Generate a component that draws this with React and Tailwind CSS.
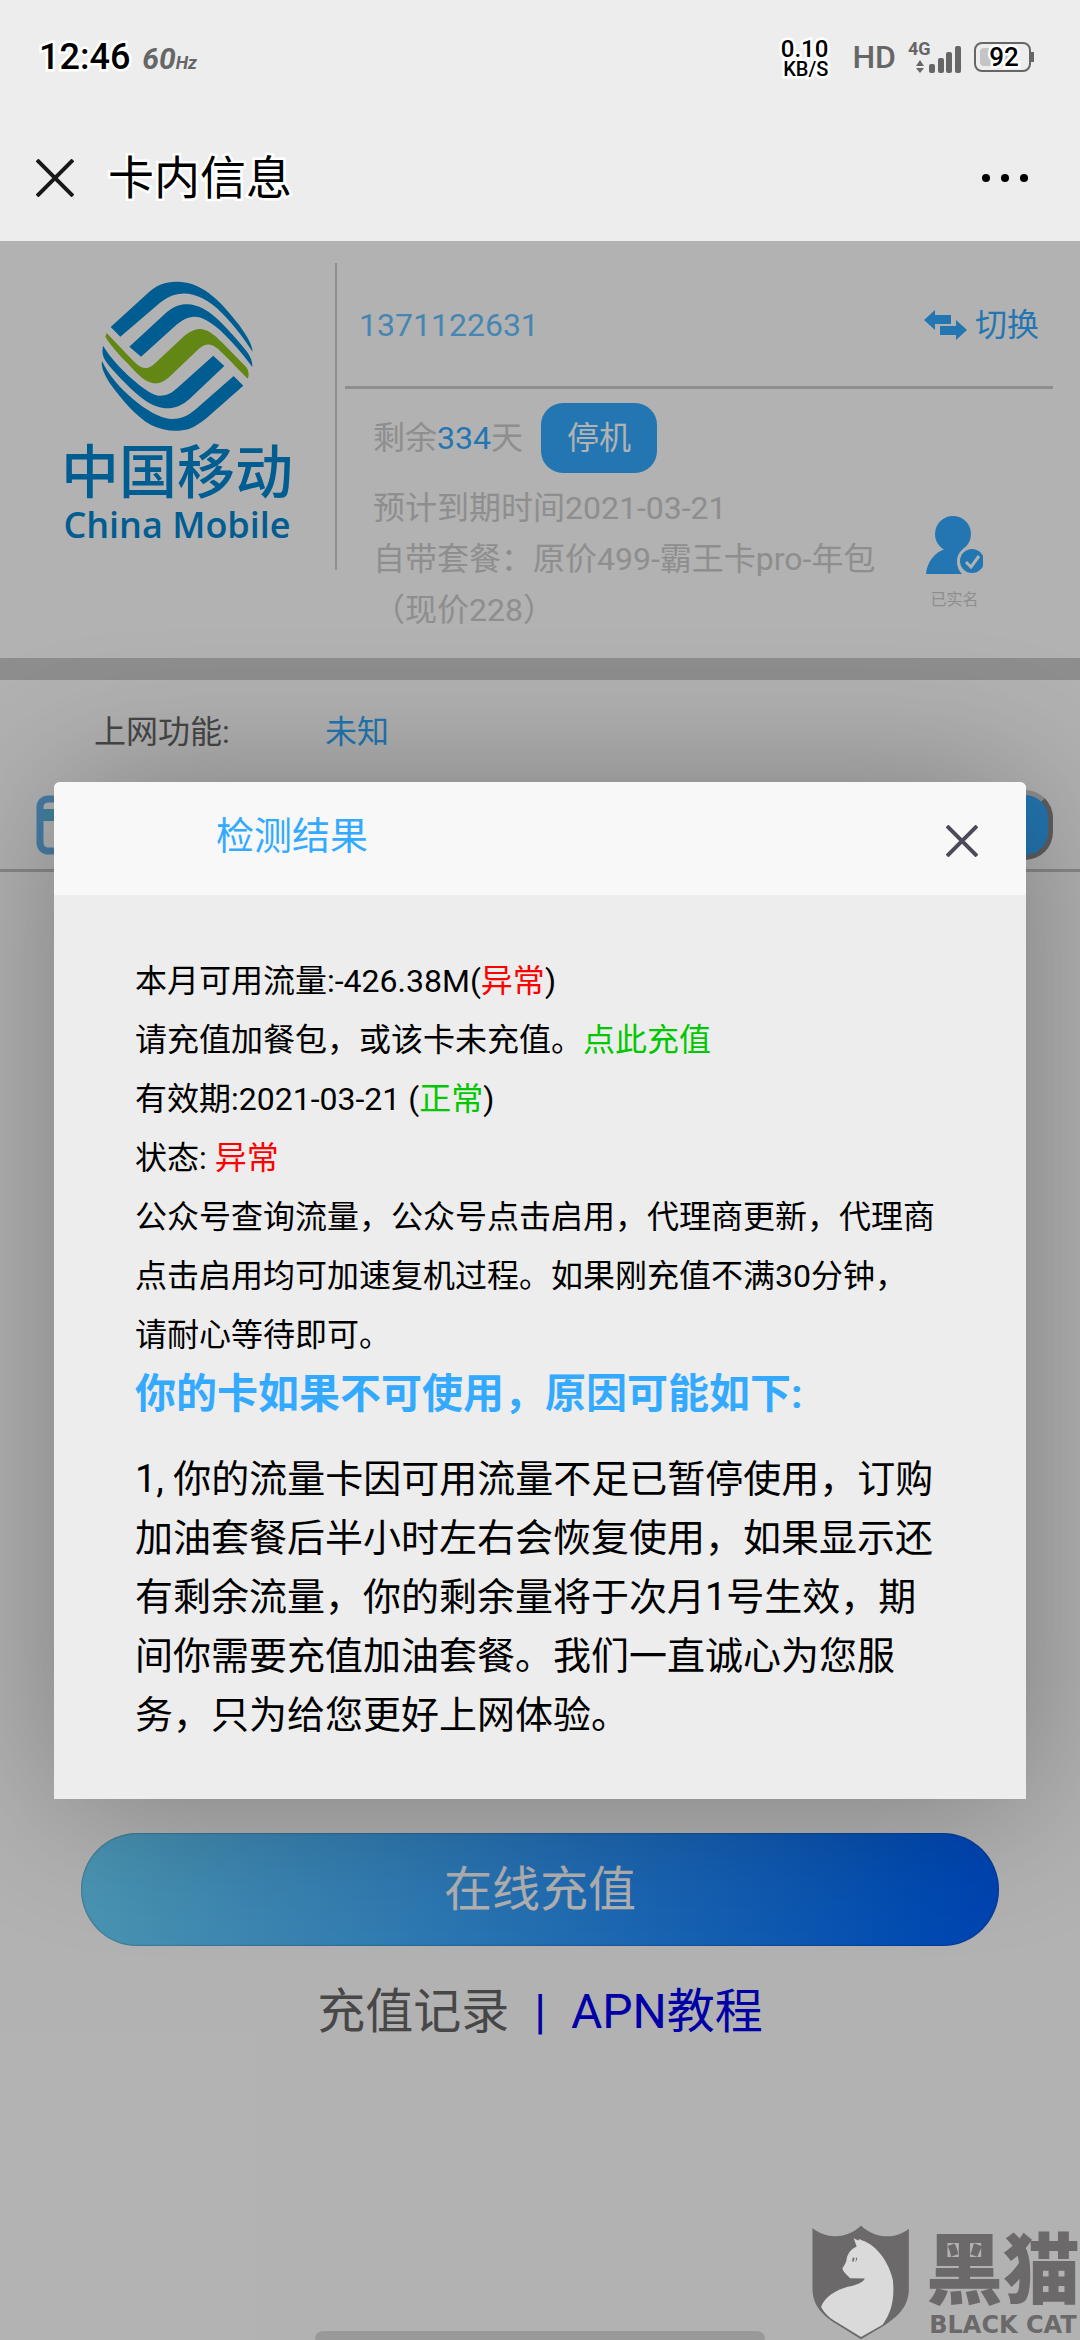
import { useState } from "react";
import { clsx } from "clsx";

const OUTLINE = "[-webkit-text-stroke:5px_#ffffff] [paint-order:stroke_fill]";

const BARS = [
  { x: 13, y: 23, h: 9 },
  { x: 22, y: 17, h: 15 },
  { x: 30, y: 11, h: 21 },
  { x: 39, y: 5, h: 27 },
];

function StatusBar() {
  return (
    <div className="flex h-[114px] items-center justify-between pl-[39px] pr-[46px]">
      <div className="flex items-baseline gap-3">
        <span className={clsx("text-[36px] font-medium text-black", OUTLINE)}>12:46</span>
        <span className="text-[30px] font-bold italic text-[#666666]">
          60<span className="text-[18px]">Hz</span>
        </span>
      </div>
      <div className="flex items-center">
        <div className={clsx("mr-6 text-right font-medium text-black", OUTLINE)}>
          <div className="text-[24px] leading-6">0.10</div>
          <div className="text-[20px] leading-4">KB/S</div>
        </div>
        <span className="mr-3 text-[32px] font-medium text-[#666666]">HD</span>
        <div className="relative mr-3 h-8 w-[54px]">
          <span className="absolute left-0 top-0 text-[18px] font-bold leading-4 text-[#666666]">4G</span>
          <svg viewBox="0 0 46 32" className="absolute right-0 top-0 h-8 w-[46px]" fill="#666666">
            {BARS.map((b) => (
              <rect key={b.x} x={b.x} y={b.y} width="6" height={b.h} rx="2" />
            ))}
            <path d="M0 25h8l-4 -6zM0 27h8l-4 5z" />
          </svg>
        </div>
        <div className="relative flex h-[30px] w-[60px] items-center justify-center">
          <svg viewBox="0 0 60 30" className="absolute inset-0 h-full w-full">
            <rect x="1" y="1" width="55" height="28" rx="7" fill="none" stroke="#666666" strokeWidth="2" />
            <rect x="6" y="6" width="34" height="18" rx="4" fill="#c4c4c4" />
            <path d="M57 10h3v10h-3z" fill="#666666" />
          </svg>
          <span className={clsx("relative text-[26px] font-medium leading-7 text-black", OUTLINE)}>92</span>
        </div>
      </div>
    </div>
  );
}

function TitleBar() {
  return (
    <div className="flex h-32 items-center pl-9 pr-[52px]">
      <button type="button" aria-label="关闭页面">
        <svg viewBox="0 0 38 38" className="h-[38px] w-[38px]" stroke="#181818" strokeWidth="4">
          <path d="M1 1l36 36M37 1L1 37" />
        </svg>
      </button>
      <h1 className={clsx("ml-[34px] flex-1 text-[46px] text-black", OUTLINE)}>卡内信息</h1>
      <button type="button" aria-label="更多" className="flex gap-[11px]">
        <span className="h-2 w-2 rounded-full bg-black" />
        <span className="h-2 w-2 rounded-full bg-black" />
        <span className="h-2 w-2 rounded-full bg-black" />
      </button>
    </div>
  );
}

function CarrierLogo() {
  return (
    <div className="flex flex-col items-center text-[#0086d1]">
      <svg viewBox="300 124 440 450" preserveAspectRatio="none" className="h-[150px] w-[152px]" fill="#0086d1">
        <path d="M328 262L440 156C470 128 500 126 525 126C600 130 650 190 700 256C722 288 738 316 739 336C715 300 690 262 650 220C610 178 570 160 535 162C505 164 490 174 470 190L356 291Z" />
        <path d="M382 321L490 218C515 196 535 192 555 194C610 200 650 250 690 296C715 328 740 350 738 382C715 350 680 306 645 272C615 244 590 230 568 231C545 234 535 242 520 254L416 351Z" />
        <path d="M316 280C345 310 375 345 400 370C420 390 435 390 455 372L540 290C560 272 575 268 590 268C615 272 630 288 650 308L720 382C728 392 729 408 725 417C705 398 670 358 645 334C620 310 605 310 585 326L500 410C480 430 462 434 448 430C420 424 395 390 370 364C345 338 322 308 313 292Z" fill="#8dc21f" />
        <path d="M657 379L625 348L520 446C500 464 485 470 465 468C440 462 415 440 390 418C360 390 325 352 306 318C302 340 304 352 322 376C350 410 390 454 425 480C455 502 480 508 505 505C530 500 545 488 560 474Z" />
        <path d="M712 438L684 409L575 508C550 530 530 538 505 538C470 536 430 510 395 480C355 446 320 404 303 364C299 384 312 408 325 430C360 480 400 530 445 556C480 574 520 578 555 568C575 560 590 548 605 536Z" />
      </svg>
      <div className="mt-2 text-[58px] font-medium leading-[68px]">中国移动</div>
      <div className="font-['Open_Sans'] text-[36px] font-semibold leading-[36px]">China Mobile</div>
    </div>
  );
}

function SwapIcon() {
  return (
    <svg viewBox="0 0 43 30" className="h-[30px] w-[43px]" fill="#33aaff">
      <path d="M0 10L11 0V5H27V14H11V20Z" />
      <path d="M43 20L32 10V16H16V25H32V30Z" />
    </svg>
  );
}

function VerifiedUserIcon() {
  return (
    <svg viewBox="0 0 57 58" className="h-[58px] w-[57px]" fill="#33aaff">
      <ellipse cx="27" cy="18" rx="18" ry="18" />
      <path d="M0 58C1 46 9 36 19 33H38C30 40 29 51 36 58Z" />
      <circle cx="46" cy="45" r="15" fill="#ffffff" />
      <circle cx="46" cy="45" r="12" />
      <path d="M40 46l5 5l8 -11" fill="none" stroke="#ffffff" strokeWidth="3" />
    </svg>
  );
}

function CardInfo() {
  return (
    <section className="flex h-[417px] items-start pt-[22px]">
      <div className="flex w-[335px] shrink-0 justify-end pr-[42px] pt-[18px]">
        <CarrierLogo />
      </div>
      <div className="h-[307px] w-0.5 shrink-0 bg-[#cccccc]" />
      <div className="ml-2 mr-[27px] flex-1">
        <div className="flex h-[126px] items-center justify-between border-b-[3px] border-[#cccccc] pl-[14px] pr-[14px]">
          <span className="text-[32px] text-[#66bfff]">1371122631</span>
          <button type="button" className="flex items-center gap-2 text-[32px] text-[#33aaff]">
            <SwapIcon />
            切换
          </button>
        </div>
        <div className="flex items-end justify-between pl-7 pt-[14px]">
          <div className="w-[520px] text-[32px] leading-[51px] text-[#cccccc]">
            <div className="mb-[10px] flex items-center gap-[18px]">
              <span>
                剩余<span className="text-[#33aaff]">334</span>天
              </span>
              <button type="button" className="h-[70px] w-[116px] rounded-[22px] bg-[#33aaff] text-white">
                停机
              </button>
            </div>
            <p>预计到期时间2021-03-21</p>
            <p>自带套餐：原价499-霸王卡pro-年包（现价228）</p>
          </div>
          <div className="mb-6 mr-[70px] flex flex-col items-center gap-[14px]">
            <VerifiedUserIcon />
            <span className="text-[16px] leading-6 text-[#cccccc]">已实名</span>
          </div>
        </div>
      </div>
    </section>
  );
}

function FlowRow() {
  return (
    <div className="flex h-[88px] items-center justify-between border-b-[3px] border-[#c4c4c4] pb-[3px] pl-9 pr-[27px]">
      <svg viewBox="0 0 60 60" className="h-[60px] w-[60px]">
        <path d="M4 14h52v12H4z" fill="#5cbbe0" />
        <rect x="4" y="4" width="52" height="52" rx="8" fill="none" stroke="#66b3f0" strokeWidth="7" />
      </svg>
      <button
        type="button"
        aria-label="检测"
        className="h-[70px] w-[150px] rounded-[28px] border-[5px] border-b-[#888888] border-l-[#cccccc] border-r-[#888888] border-t-[#cccccc] bg-[#33aaff]"
      />
    </div>
  );
}

function ResultDialog({ onClose }) {
  return (
    <div className="absolute inset-0 flex items-center justify-center overflow-hidden bg-black/30">
      <div
        role="dialog"
        aria-labelledby="result-title"
        className="w-[90%] rounded-t-md bg-[#ededed] shadow-[3px_3px_150px_rgba(0,0,0,0.3)]"
      >
        <div className="flex h-[113px] items-center justify-between rounded-t-md bg-[#f8f8f8] pl-[162px] pr-[48px]">
          <h2 id="result-title" className="pb-1 text-[38px] text-[#33aaff]">检测结果</h2>
          <button type="button" aria-label="关闭" onClick={onClose} className="pt-1">
            <svg viewBox="0 0 32 32" className="h-8 w-8" stroke="#4a4a58" strokeWidth="4">
              <path d="M1 1l30 30M31 1L1 31" />
            </svg>
          </button>
        </div>
        <div className="pb-[54px] pl-[81px] pr-[90px] pt-[57px] text-[32px] leading-[59px] text-black">
          <p>本月可用流量:-426.38M(<span className="text-[#ff0000]">异常</span>)</p>
          <p>请充值加餐包，或该卡未充值。<a href="#recharge" className="text-[#00c800]">点此充值</a></p>
          <p>有效期:2021-03-21 (<span className="text-[#00c800]">正常</span>)</p>
          <p>状态: <span className="text-[#ff0000]">异常</span></p>
          <p>公众号查询流量，公众号点击启用，代理商更新，代理商点击启用均可加速复机过程。如果刚充值不满30分钟，请耐心等待即可。</p>
          <h3 className="text-[41px] font-bold text-[#33aaff]">你的卡如果不可使用，原因可能如下:</h3>
          <p className="mt-[26px] text-[38px]">
            1, 你的流量卡因可用流量不足已暂停使用，订购加油套餐后半小时左右会恢复使用，如果显示还有剩余流量，你的剩余量将于次月1号生效，期间你需要充值加油套餐。我们一直诚心为您服务，只为给您更好上网体验。
          </p>
        </div>
      </div>
    </div>
  );
}

function Watermark() {
  return (
    <div className="absolute bottom-0 right-0 flex items-end gap-4 text-[#6b696a]">
      <svg viewBox="94 74 292 346" className="h-[115px] w-[98px]">
        <path d="M94 83C135 117 195 117 240 76C285 117 345 117 384 85V265C384 320 350 350 310 376L240 418L170 374C130 350 94 320 94 265Z" fill="#6b696a" />
        <path d="M218 114L232 121L236 116L242 120C290 135 325 190 336 240C342 300 330 340 305 374L240 411L170 368C145 355 130 340 120 321C130 290 165 270 200 260C225 255 245 248 252 235L207 234C200 225 185 215 184 204C190 195 196 188 197 175C200 160 212 145 227 139Z" fill="#dadada" />
        <path d="M214 176C216 170 222 171 220 178C218 184 215 188 214 184ZM224 172C230 172 230 180 222 186C225 181 226 177 224 172Z" fill="#6b696a" />
      </svg>
      <div className="flex flex-col items-center">
        <span className="text-[77px] font-black leading-[76px]">黑猫</span>
        <span className="whitespace-nowrap font-['DejaVu_Sans'] text-[24px] font-bold leading-[30px]">BLACK CAT</span>
      </div>
    </div>
  );
}

export default function App() {
  const [open, setOpen] = useState(true);

  return (
    <div className="flex min-h-screen flex-col bg-[#ededed] font-[Roboto,'Noto_Sans_CJK_SC',sans-serif]">
      <header className="h-[241px]">
        <StatusBar />
        <TitleBar />
      </header>
      <main className="relative flex-1 bg-white">
        <CardInfo />
        <div className="h-[22px] bg-[#cccccc]" />
        <div className="flex h-[104px] items-center pl-[94px] text-[32px]">
          <span className="w-[231px] text-[#666666]">上网功能:</span>
          <span className="text-[#33aaff]">未知</span>
        </div>
        <FlowRow />
        <div className="px-[81px] pt-[961px]">
          <button
            type="button"
            className="h-[113px] w-full rounded-full bg-linear-to-r from-[#6bd5ff] to-[#0060ff] text-[48px] text-white shadow-[inset_0_0_2px_rgba(0,0,0,0.5)]"
          >
            在线充值
          </button>
        </div>
        <nav className="mt-[30px] flex justify-center gap-[25px] text-[48px] text-[#0000ee]">
          <a href="#records" className="text-[#666666]">充值记录</a>
          <span>|</span>
          <a href="#apn">APN教程</a>
        </nav>
        {open && <ResultDialog onClose={() => setOpen(false)} />}
        <div className="absolute bottom-0 left-1/2 h-[9px] w-[450px] -translate-x-1/2 rounded-t-lg bg-[#999999]" />
        <Watermark />
      </main>
    </div>
  );
}
